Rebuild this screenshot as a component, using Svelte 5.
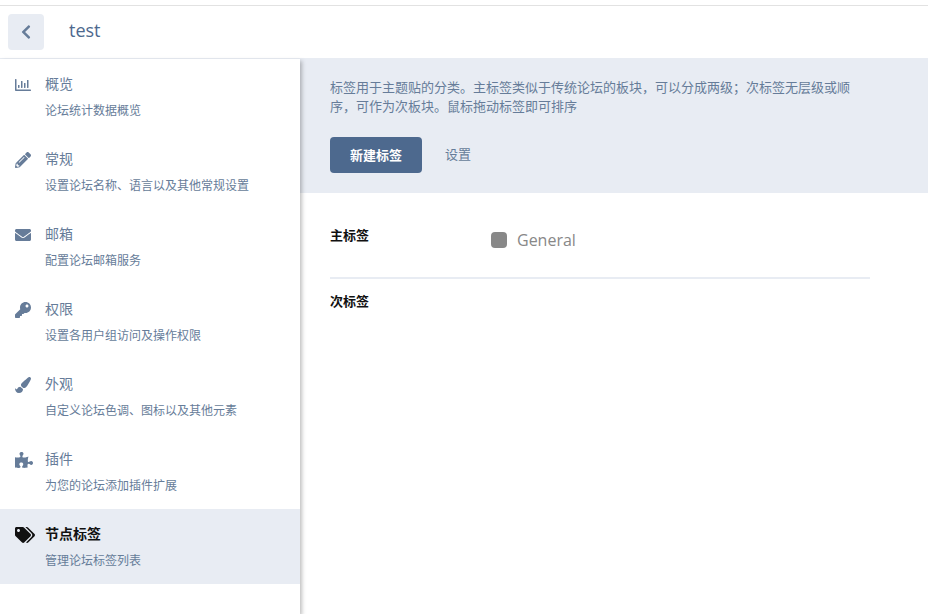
<script>
  const items = [
    { t: '概览', d: '论坛统计数据概览', vb: '0 0 512 512', w: 16, p: 'M396.8 352h22.4c6.4 0 12.8-6.4 12.8-12.8V108.8c0-6.4-6.4-12.8-12.8-12.8h-22.4c-6.4 0-12.8 6.4-12.8 12.8v230.4c0 6.4 6.4 12.8 12.8 12.8zm-192 0h22.4c6.4 0 12.8-6.4 12.8-12.8V140.8c0-6.4-6.4-12.8-12.8-12.8h-22.4c-6.4 0-12.8 6.4-12.8 12.8v198.4c0 6.4 6.4 12.8 12.8 12.8zm96 0h22.4c6.4 0 12.8-6.4 12.8-12.8V204.8c0-6.4-6.4-12.8-12.8-12.8h-22.4c-6.4 0-12.8 6.4-12.8 12.8v134.4c0 6.4 6.4 12.8 12.8 12.8zM496 400H48V80c0-8.84-7.16-16-16-16H16C7.16 64 0 71.16 0 80v336c0 17.67 14.33 32 32 32h464c8.84 0 16-7.16 16-16v-16c0-8.84-7.16-16-16-16zm-387.2-48h22.4c6.4 0 12.8-6.4 12.8-12.8v-70.4c0-6.4-6.4-12.8-12.8-12.8h-22.4c-6.4 0-12.8 6.4-12.8 12.8v70.4c0 6.4 6.4 12.8 12.8 12.8z' },
    { t: '常规', d: '设置论坛名称、语言以及其他常规设置', vb: '0 0 512 512', w: 16, p: 'M497.9 142.1l-46.1 46.1c-4.7 4.7-12.3 4.7-17 0l-111-111c-4.7-4.7-4.7-12.3 0-17l46.1-46.1c18.7-18.7 49.1-18.7 67.9 0l60.1 60.1c18.8 18.7 18.8 49.1 0 67.9zM284.2 99.8L21.6 362.4.4 483.9c-2.9 16.4 11.4 30.6 27.8 27.8l121.5-21.3 262.6-262.6c4.7-4.7 4.7-12.3 0-17l-111-111c-4.8-4.7-12.4-4.7-17.1 0zM124.1 339.9c-5.5-5.5-5.5-14.3 0-19.8l154-154c5.5-5.5 14.3-5.5 19.8 0s5.5 14.3 0 19.8l-154 154c-5.5 5.5-14.3 5.5-19.8 0zM88 424h48v36.3l-64.5 11.3-31.1-31.1L51.7 376H88v48z' },
    { t: '邮箱', d: '配置论坛邮箱服务', vb: '0 0 512 512', w: 16, p: 'M502.3 190.8c3.9-3.1 9.7-.2 9.7 4.7V400c0 26.5-21.5 48-48 48H48c-26.5 0-48-21.5-48-48V195.6c0-5 5.7-7.8 9.7-4.7 22.4 17.4 52.1 39.5 154.1 113.6 21.1 15.4 56.7 47.8 92.2 47.6 35.7.3 72-32.8 92.3-47.6 102-74.1 131.6-96.3 154-113.7zM256 320c23.2.4 56.6-29.2 73.4-41.4 132.7-96.3 142.8-104.7 173.4-128.7 5.8-4.5 9.2-11.5 9.2-18.9v-19c0-26.5-21.5-48-48-48H48C21.5 64 0 85.5 0 112v19c0 7.4 3.4 14.3 9.2 18.9 30.6 23.9 40.7 32.4 173.4 128.7 16.8 12.2 50.2 41.8 73.4 41.4z' },
    { t: '权限', d: '设置各用户组访问及操作权限', vb: '0 0 512 512', w: 16, p: 'M512 176.001C512 273.203 433.202 352 336 352c-11.22 0-22.19-1.062-32.827-3.069l-24.012 27.014A23.999 23.999 0 0 1 261.223 384H224v40c0 13.255-10.745 24-24 24h-40v40c0 13.255-10.745 24-24 24H24c-13.255 0-24-10.745-24-24v-78.059c0-6.365 2.529-12.47 7.029-16.971l161.802-161.802C163.108 213.814 160 195.271 160 176 160 78.798 238.797.001 335.999 0 433.488-.001 512 78.511 512 176.001zM336 128c0 26.51 21.49 48 48 48s48-21.49 48-48-21.49-48-48-48-48 21.49-48 48z' },
    { t: '外观', d: '自定义论坛色调、图标以及其他元素', vb: '0 0 512 512', w: 16, p: 'M167.02 309.34c-40.12 2.58-76.53 17.86-97.19 72.3-2.35 6.21-8 9.98-14.59 9.98-11.11 0-45.46-27.67-55.25-34.35C0 439.62 37.93 512 128 512c75.86 0 128-43.77 128-120.19 0-3.11-.65-6.08-.97-9.13l-88.01-73.34zM457.89 0c-15.16 0-29.37 6.71-40.21 16.45C213.27 199.05 192 203.34 192 257.09c0 13.7 3.25 26.76 8.73 38.7l63.82 53.18c7.21 1.8 14.64 3.03 22.39 3.03 62.11 0 98.11-45.47 211.16-256.46 7.38-14.35 13.9-29.85 13.9-45.99C512 20.64 486 0 457.89 0z' },
    { t: '插件', d: '为您的论坛添加插件扩展', vb: '0 0 576 512', w: 18, p: 'M519.442 288.651c-41.519 0-59.5 31.593-82.058 31.593C377.409 320.244 432 144 432 144s-196.288 80-196.288-3.297c0-35.827 36.288-46.25 36.288-85.985C272 19.216 243.885 0 210.539 0c-34.654 0-66.366 18.891-66.366 56.346 0 41.364 31.711 59.277 31.711 81.75C175.885 207.719 0 166.758 0 166.758v333.237s178.635 41.047 178.635-28.662c0-22.473-40-40.107-40-81.471 0-37.456 29.25-56.346 63.577-56.346 33.673 0 61.788 19.216 61.788 54.717 0 39.735-36.288 50.158-36.288 85.985 0 60.803 129.675 25.73 181.23 25.73 0 0-34.725-120.101 25.827-120.101 35.962 0 46.423 36.152 86.308 36.152C556.712 416 576 387.99 576 354.443c0-34.199-18.962-65.792-56.558-65.792z' },
    { t: '节点标签', d: '管理论坛标签列表', vb: '0 0 640 512', w: 20, active: true, p: 'M497.941 225.941L286.059 14.059A48 48 0 0 0 252.118 0H48C21.49 0 0 21.49 0 48v204.118a48 48 0 0 0 14.059 33.941l211.882 211.882c18.744 18.745 49.136 18.746 67.882 0l204.118-204.118c18.745-18.745 18.745-49.137 0-67.882zM112 160c-26.51 0-48-21.49-48-48s21.49-48 48-48 48 21.49 48 48-21.49 48-48 48zm513.941 133.823L421.823 497.941c-18.745 18.745-49.137 18.745-67.882 0l-.36-.36L527.64 323.522c16.999-16.999 26.36-39.6 26.36-63.64s-9.362-46.641-26.36-63.64L331.397 0h48.721a48 48 0 0 1 33.941 14.059l211.882 211.882c18.745 18.745 18.745 49.137 0 67.882z' }
  ];
</script>

<div class="page">
  <header class="top">
    <button class="back" aria-label="返回">
      <svg viewBox="0 0 320 512" width="10" height="16"><path fill="currentColor" d="M34.52 239.03L228.87 44.69c9.37-9.37 24.57-9.37 33.94 0l22.67 22.67c9.36 9.36 9.37 24.52.04 33.9L131.49 256l154.02 154.75c9.34 9.38 9.32 24.54-.04 33.9l-22.67 22.67c-9.37 9.37-24.57 9.37-33.94 0L34.52 272.97c-9.37-9.37-9.37-24.57 0-33.94z"/></svg>
    </button>
    <h1>test</h1>
  </header>

  <div class="layout">
    <nav class="side">
      {#each items as it}
        <a class="item" class:active={it.active} href="#top">
          <span class="icon">
            <svg viewBox={it.vb} width={it.w} height="16"><path fill="currentColor" d={it.p}/></svg>
          </span>
          <span class="text">
            <span class="title">{it.t}</span>
            <span class="desc">{it.d}</span>
          </span>
        </a>
      {/each}
    </nav>

    <main class="main">
      <section class="hero">
        <p>标签用于主题贴的分类。主标签类似于传统论坛的板块&#xFF0C;可以分成两级&#xFF1B;次标签无层级或顺序&#xFF0C;可作为次板块。鼠标拖动标签即可排序</p>
        <div class="actions">
          <button class="primary">新建标签</button>
          <button class="link">设置</button>
        </div>
      </section>
      <section class="body">
        <div class="group primary-tags">
          <h3>主标签</h3>
          <div class="tag"><span class="swatch"></span><span class="name">General</span></div>
        </div>
        <div class="group secondary-tags">
          <h3>次标签</h3>
        </div>
      </section>
    </main>
  </div>
</div>

<style>
  :global(body) {
    margin: 0;
    background: #fff;
    font-family: "Open Sans", "Noto Sans CJK SC", sans-serif;
    overflow: hidden;
  }
  .page {
    height: 614px;
    display: flex;
    flex-direction: column;
    padding-top: 5px;
    box-sizing: border-box;
  }
  .top {
    height: 54px;
    box-sizing: border-box;
    border-top: 1px solid #e2e2e2;
    border-bottom: 1px solid #e8ecf3;
    display: flex;
    align-items: center;
    padding-left: 8px;
  }
  .back {
    width: 36px;
    height: 36px;
    border: 0;
    border-radius: 4px;
    background: #e8ecf3;
    color: #667c99;
    display: flex;
    align-items: center;
    justify-content: center;
    padding: 0;
  }
  h1 {
    margin: 0 0 4px 25px;
    font-size: 18px;
    font-weight: 400;
    color: #4d698e;
  }
  .layout {
    flex: 1;
    display: flex;
    min-height: 0;
  }
  .side {
    width: 300px;
    flex: none;
    position: relative;
    z-index: 1;
    background: #fff;
    box-shadow: 2px 2px 4px rgba(0, 0, 0, 0.25);
  }
  .item {
    height: 75px;
    box-sizing: border-box;
    display: flex;
    padding: 12px 0 0 15px;
    text-decoration: none;
    color: #667c99;
  }
  .item.active {
    background: #e8ecf3;
  }
  .icon {
    width: 30px;
    flex: none;
    display: flex;
    height: 26px;
    margin-top: 1px;
    align-items: center;
  }
  .text {
    display: flex;
    flex-direction: column;
  }
  .title {
    font-size: 14px;
    line-height: 26px;
  }
  .desc {
    font-size: 12px;
    line-height: 24px;
    margin-top: 2px;
  }
  .active .title {
    font-weight: 700;
    color: #111;
  }
  .active .icon {
    color: #111;
  }
  .main {
    flex: 1;
    min-width: 0;
  }
  .hero {
    height: 134px;
    box-sizing: border-box;
    background: #e8ecf3;
    padding: 19px 30px 0;
  }
  .hero p {
    margin: 0;
    width: 525px;
    font-size: 13px;
    line-height: 19px;
    color: #667c99;
  }
  .actions {
    margin-top: 21px;
    display: flex;
    align-items: center;
  }
  .primary {
    width: 92px;
    height: 36px;
    border: 0;
    border-radius: 4px;
    background: #4d698e;
    color: #fff;
    font: 700 13px "Open Sans", "Noto Sans CJK SC", sans-serif;
    padding: 0 0 2px;
  }
  .link {
    margin: 0 0 4px 23px;
    border: 0;
    background: none;
    padding: 0;
    color: #667c99;
    font: 400 13px "Open Sans", "Noto Sans CJK SC", sans-serif;
  }
  .body {
    width: 540px;
    padding: 0 30px;
  }
  .group {
    display: flex;
  }
  .primary-tags {
    height: 86px;
    box-sizing: border-box;
    padding-top: 33px;
    border-bottom: 2px solid #e8ecf3;
  }
  .secondary-tags {
    padding-top: 13px;
  }
  h3 {
    margin: 0;
    width: 161px;
    flex: none;
    font-size: 13px;
    line-height: 19.5px;
    font-weight: 700;
    color: #111;
  }
  .tag {
    display: flex;
    align-items: center;
    height: 26px;
    margin-top: 1px;
  }
  .swatch {
    width: 16px;
    height: 16px;
    border-radius: 4px;
    background: #888;
    margin-right: 10px;
  }
  .name {
    font-size: 16px;
    color: #888;
  }
</style>
